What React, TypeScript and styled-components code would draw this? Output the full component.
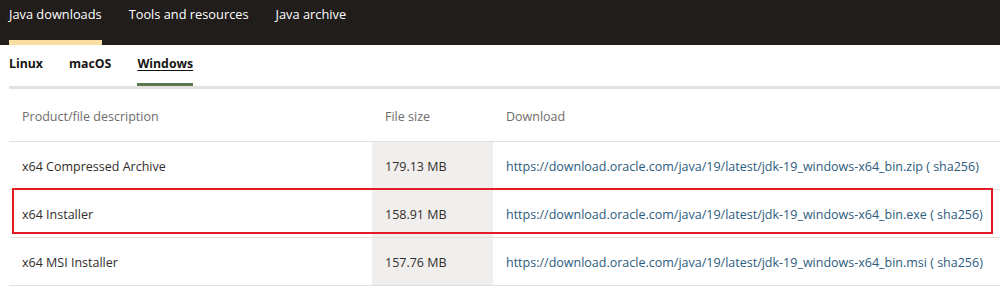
import styled, { createGlobalStyle } from "styled-components";

const Global = createGlobalStyle`
	body {
		margin: 0;
		background: #fff;
		font-family: "Open Sans", "Noto Sans", sans-serif;
		color: #312d2a;
	}
`;

const TopNav = styled.nav`
	display: flex;
	flex-flow: row nowrap;
	gap: 27px;
	height: 45px;
	padding-left: 9px;
	background: #201d1b;
`;

const TopTab = styled.a<{ $active?: boolean }>`
	display: flex;
	align-items: flex-start;
	padding-top: 4px;
	font-size: 12.8px;
	line-height: 20px;
	color: #fff;
	text-decoration: none;
	box-sizing: border-box;
	border-bottom: 5px solid ${(p) => (p.$active ? "#f8dea0" : "transparent")};
`;

const SubNav = styled.nav`
	display: flex;
	flex-flow: row nowrap;
	gap: 26px;
	margin-left: 9px;
	height: 44px;
	box-sizing: border-box;
	padding-top: 9px;
	border-bottom: 3px solid #e4e2de;
`;

const SubTab = styled.a<{ $active?: boolean }>`
	font-size: 12.3px;
	font-weight: 700;
	line-height: 20px;
	color: #161513;
	text-decoration: ${(p) => (p.$active ? "underline" : "none")};
	text-underline-offset: 2px;
	position: relative;
	height: 32px;
	&::after {
		content: "";
		display: ${(p) => (p.$active ? "block" : "none")};
		position: absolute;
		left: 0;
		right: 0;
		bottom: 0;
		height: 3px;
		background: #5b7a4e;
	}
`;

const Table = styled.div`
	margin-left: 9px;
	position: relative;
`;

const Row = styled.div<{ $head?: boolean }>`
	display: grid;
	grid-template-columns: 363px 121px 1fr;
	height: ${(p) => (p.$head ? "53px" : "48px")};
	border-bottom: 1px solid #e2e0dd;
	box-sizing: border-box;
`;

const Cell = styled.div<{ $head?: boolean; $shaded?: boolean }>`
	display: flex;
	align-items: center;
	padding-left: 13px;
	padding-top: 2px;
	font-size: 12.5px;
	white-space: nowrap;
	color: ${(p) => (p.$head ? "#6f6c69" : "#312d2a")};
	background: ${(p) => (p.$shaded ? "#f1efed" : "transparent")};
`;

const Link = styled.a`
	color: #2c5c7e;
	text-decoration: none;
`;

const Highlight = styled.div`
	position: absolute;
	left: 3px;
	top: 99px;
	width: 981px;
	height: 46px;
	border: 2px solid #e41b23;
	box-sizing: border-box;
	pointer-events: none;
`;

const files = [
	{ name: "x64 Compressed Archive", size: "179.13 MB", ext: "zip" },
	{ name: "x64 Installer", size: "158.91 MB", ext: "exe" },
	{ name: "x64 MSI Installer", size: "157.76 MB", ext: "msi" },
];

const App = () => {
	return (
		<>
			<Global />
			<TopNav>
				<TopTab $active>Java downloads</TopTab>
				<TopTab>Tools and resources</TopTab>
				<TopTab>Java archive</TopTab>
			</TopNav>
			<SubNav>
				<SubTab>Linux</SubTab>
				<SubTab>macOS</SubTab>
				<SubTab $active>Windows</SubTab>
			</SubNav>
			<Table>
				<Row $head>
					<Cell $head>Product/file description</Cell>
					<Cell $head>File size</Cell>
					<Cell $head>Download</Cell>
				</Row>
				{files.map((f) => {
					const url = `https://download.oracle.com/java/19/latest/jdk-19_windows-x64_bin.${f.ext}`;
					return (
						<Row key={f.ext}>
							<Cell>{f.name}</Cell>
							<Cell $shaded>{f.size}</Cell>
							<Cell>
								<Link href={url}>{url}</Link>
								&nbsp;<Link>( sha256)</Link>
							</Cell>
						</Row>
					);
				})}
				<Highlight />
			</Table>
		</>
	);
};

export default App;
